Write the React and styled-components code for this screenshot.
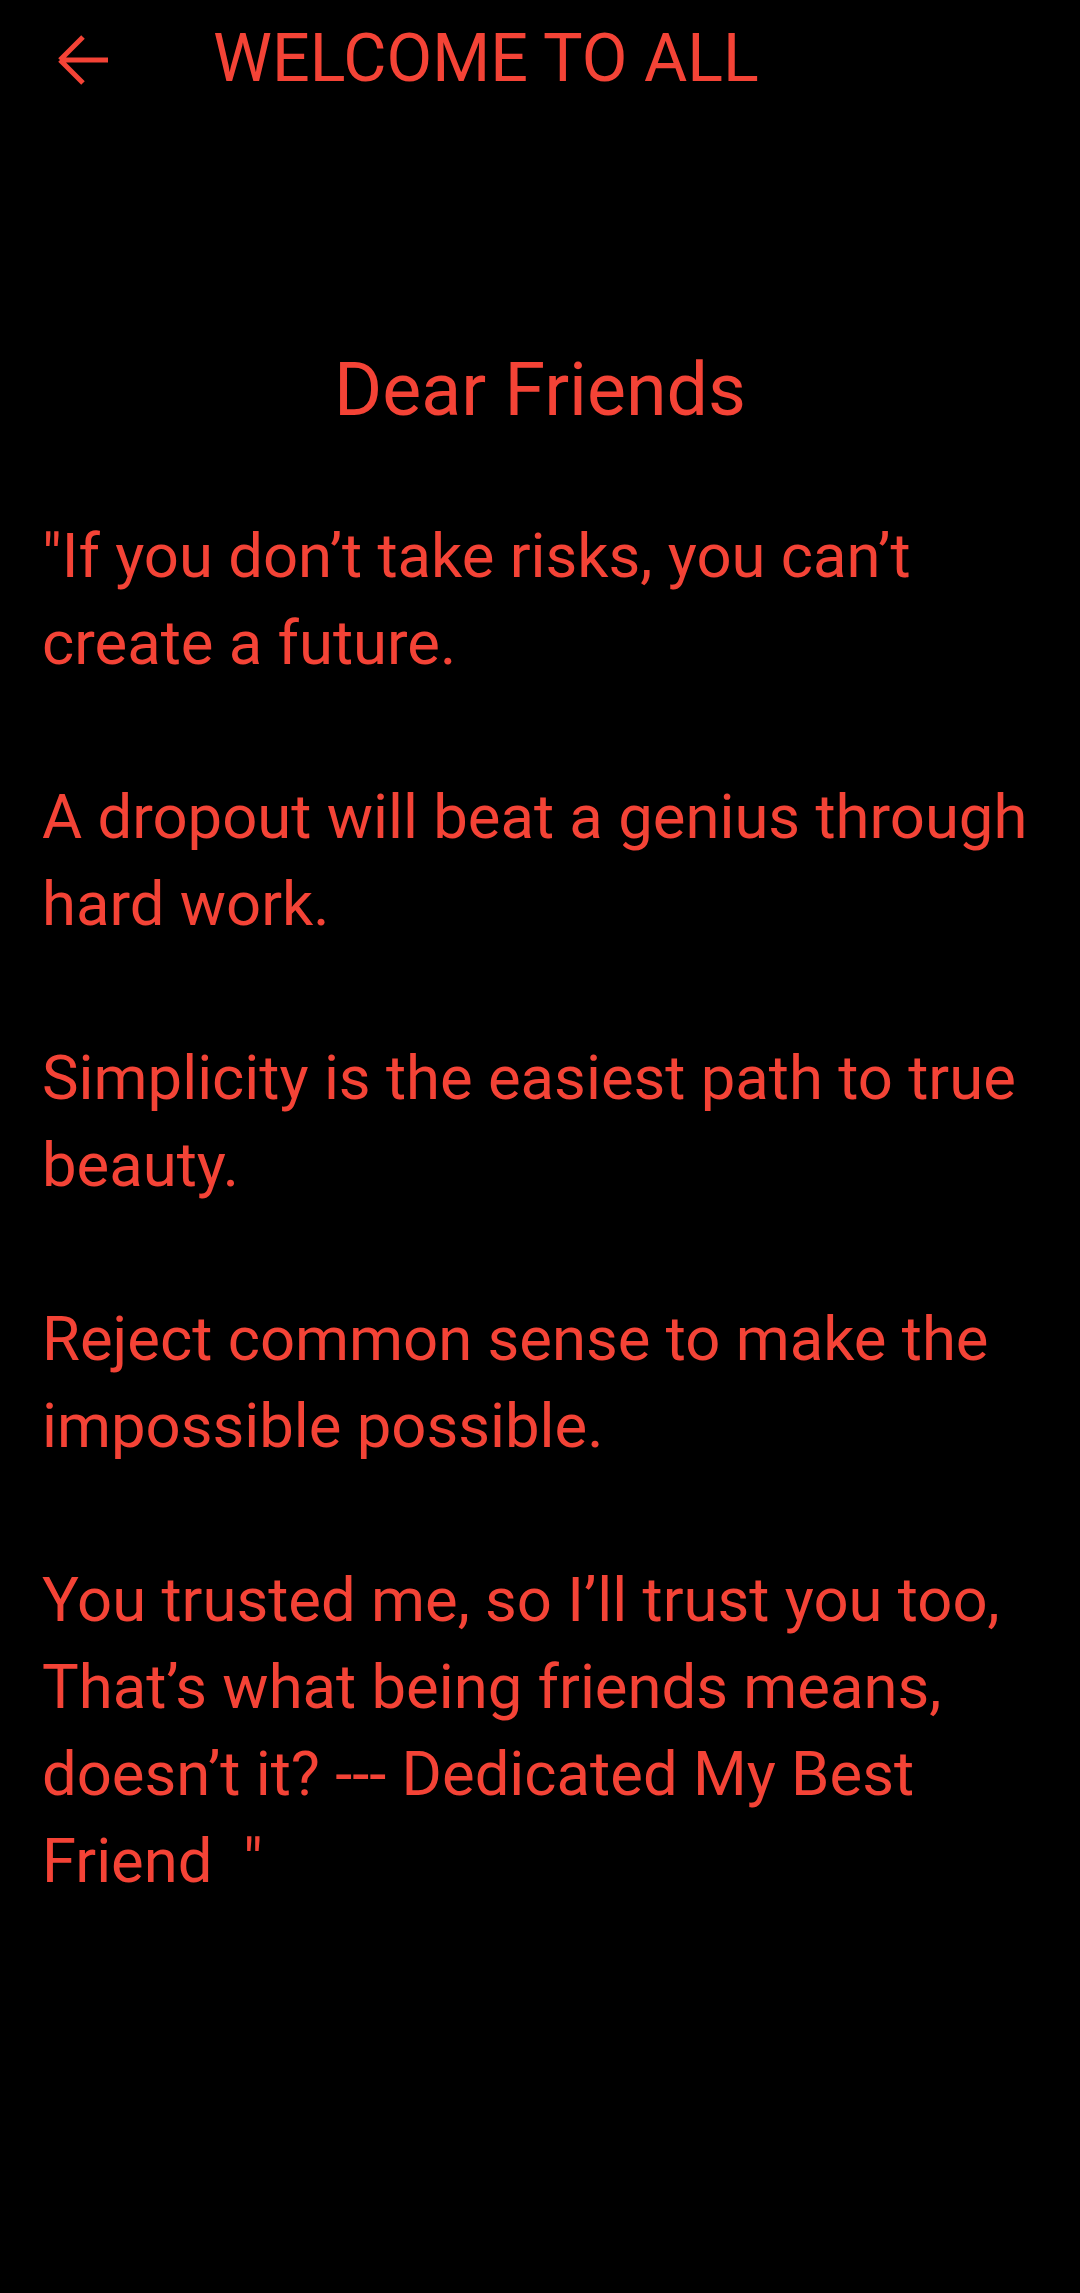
import React from 'react';
import styled, { createGlobalStyle } from 'styled-components';

const RED = '#f44336';

const paragraphs = [
  '"If you don’t take risks, you can’t create a future.',
  'A dropout will beat a genius through hard work.',
  'Simplicity is the easiest path to true beauty.',
  'Reject common sense to make the impossible possible.',
  'You trusted me, so I’ll trust you too, That’s what being friends means, doesn’t it? --- Dedicated My Best Friend  "',
];

function BackArrow() {
  return (
    <svg width="54" height="50" viewBox="0 0 54 50" fill="none">
      <path
        d="M5 25 H53 M5 25 L28 2 M5 25 L28 48"
        stroke={RED}
        strokeWidth="5"
        strokeLinecap="butt"
        strokeLinejoin="miter"
      />
    </svg>
  );
}

export default function App() {
  return (
    <>
      <GlobalStyle />
      <Screen>
        <Toolbar>
          <BackButton aria-label="back">
            <BackArrow />
          </BackButton>
          <ToolbarTitle>WELCOME TO ALL</ToolbarTitle>
        </Toolbar>

        <Greeting>Dear Friends</Greeting>

        <Quote>
          {paragraphs.map((p, i) => (
            <Paragraph key={i}>{p}</Paragraph>
          ))}
        </Quote>
      </Screen>
    </>
  );
}

const GlobalStyle = createGlobalStyle`
  html, body {
    margin: 0;
    padding: 0;
    background: #000;
  }
  body {
    font-family: Roboto, "Noto Sans", "Liberation Sans", sans-serif;
  }
`;

const Screen = styled.div`
  width: 1080px;
  min-height: 2293px;
  background: #000;
  color: ${RED};
  display: flex;
  flex-direction: column;
`;

const Toolbar = styled.header`
  height: 116px;
  display: flex;
  align-items: center;
  padding-left: 55px;
`;

const BackButton = styled.button`
  display: flex;
  align-items: center;
  justify-content: center;
  padding: 0;
  border: none;
  background: transparent;
  cursor: pointer;
  margin-top: 4px;
`;

const ToolbarTitle = styled.h1`
  margin: 0 0 0 104px;
  font-size: 66.4px;
  font-weight: 400;
  line-height: 1;
  letter-spacing: 0;
`;

const Greeting = styled.h2`
  margin: 230px 0 0;
  font-size: 73.5px;
  font-weight: 400;
  line-height: 88px;
  text-align: center;
`;

const Quote = styled.div`
  margin-top: 79px;
  padding: 0 36px 0 42px;
  font-size: 61.6px;
  line-height: 87px;
`;

const Paragraph = styled.p`
  margin: 0 0 87px;
  white-space: pre-wrap;

  &:last-child {
    margin-bottom: 0;
  }
`;
